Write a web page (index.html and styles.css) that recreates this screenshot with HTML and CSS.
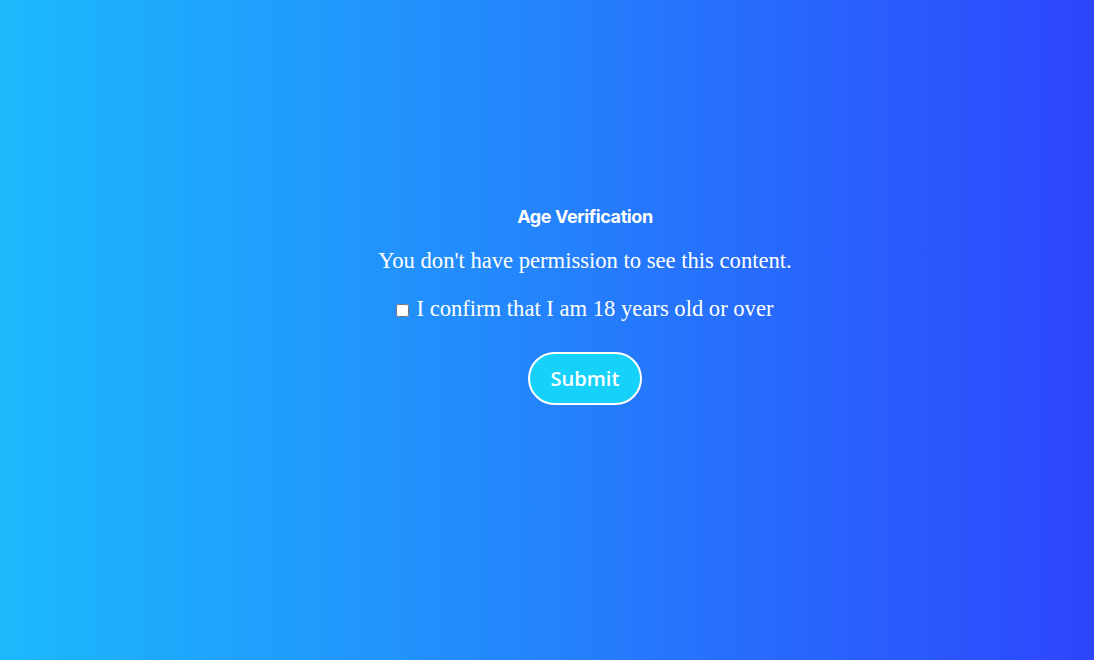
FILE: index.html
```html
<!DOCTYPE html>
<html lang="en">
<head>
<meta charset="utf-8">
<title>Age Verification</title>
<link rel="stylesheet" href="styles.css">
</head>
<body>
<main class="page">
  <section class="gate">
    <h1 class="title">Age Verification</h1>
    <p class="message">You don't have permission to see this content.</p>
    <label class="confirm"><input type="checkbox" class="check"> I confirm that I am 18 years old or over</label>
    <button class="submit" type="button">Submit</button>
  </section>
</main>
</body>
</html>
```
FILE: styles.css
```css
html, body {
  margin: 0;
  padding: 0;
  height: 100%;
}
body {
  background: linear-gradient(90deg, #1cb9fc 0%, #2389fc 45%, #2d45fd 100%);
  color: #fff;
}
.page {
  height: 660px;
  box-sizing: border-box;
  padding-left: 76px;
  display: flex;
  align-items: center;
  justify-content: center;
}
.gate {
  display: flex;
  flex-direction: column;
  align-items: center;
  margin-top: -50px;
}
.title {
  font-family: Inter, "Liberation Sans", sans-serif;
  font-weight: 700;
  font-size: 18px;
  letter-spacing: -0.4px;
  margin: 0 0 20px;
  line-height: 22px;
}
.message {
  font-family: "Liberation Serif", serif;
  font-size: 22.6px;
  margin: 0 0 22px;
  line-height: 26px;
}
.confirm {
  font-family: "Liberation Serif", serif;
  font-size: 22.6px;
  line-height: 26px;
  display: flex;
  align-items: center;
  gap: 7px;
}
.check {
  width: 13px;
  height: 13px;
  margin: 4px 0 0;
}
.submit {
  margin-top: 30px;
  width: 114px;
  height: 53px;
  border: 2px solid #fff;
  border-radius: 27px;
  background: #16d2fb;
  color: #fff;
  font-family: "Open Sans", sans-serif;
  font-size: 20px;
  font-weight: 600;
  cursor: pointer;
}
```
